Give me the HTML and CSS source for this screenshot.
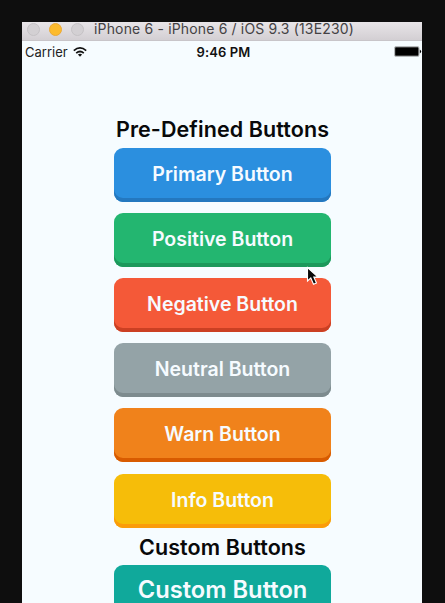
FILE: index.html
```
<!DOCTYPE html>
<html lang="en">
<head>
<meta charset="utf-8">
<title>Buttons</title>
<link rel="stylesheet" href="styles.css">
</head>
<body>
<div class="simulator">
  <header class="titlebar">
    <i class="dot"></i><i class="dot minimize"></i><i class="dot"></i>
    <span class="window-title">iPhone 6 - iPhone 6 / iOS 9.3 (13E230)</span>
  </header>
  <div class="status">
    <div class="carrier"><span>Carrier</span>
      <svg class="wifi" viewBox="0 0 14 10" width="14" height="10"><g fill="none" stroke="#111" stroke-width="1.7"><path d="M.8 3.6Q7-1.8 13.2 3.6"/><path d="M3.2 6.1Q7 2.9 10.8 6.1"/></g><path d="M4.9 7.6Q7 6 9.1 7.6L7 9.8Z" fill="#111"/></svg>
    </div>
    <time class="clock">9:46 PM</time>
    <svg class="battery" viewBox="0 0 28 11" width="28" height="11"><rect x=".5" y=".5" width="24.5" height="10" rx="1.5" fill="#777" stroke="#b5b9bb"/><rect x="1.3" y="1.5" width="23" height="8" rx=".5"/><path d="M25.8 3.5Q28.5 5.5 25.8 7.5Z"/></svg>
  </div>
  <main class="content">
    <h2 class="heading">Pre-Defined Buttons</h2>
    <div class="stack">
      <button class="btn primary">Primary Button</button>
      <button class="btn positive">Positive Button</button>
      <button class="btn negative">Negative Button</button>
      <button class="btn neutral">Neutral Button</button>
      <button class="btn warn">Warn Button</button>
      <button class="btn info">Info Button</button>
    </div>
    <h2 class="heading second">Custom Buttons</h2>
    <button class="btn custom">Custom Button</button>
  </main>
</div>
<svg class="cursor" viewBox="0 0 14 20" width="14" height="20"><path d="M1.5 1.5V15L4.8 12L7.5 18.2L10.5 17L7.8 11H12Z" fill="#080808" stroke="#fff" stroke-width="1.1"/></svg>
</body>
</html>
```
FILE: styles.css
```
* { box-sizing: border-box; }
html, body { height: 100%; }
body {
  margin: 0;
  padding: 22px 23px 0 22px;
  overflow: hidden;
  background: #0e0e0e;
  font-family: Inter, "Liberation Sans", sans-serif;
}
.simulator { height: 581px; overflow: hidden; background: #f6fcff; }
.titlebar {
  display: flex;
  align-items: center;
  height: 19px;
  padding: 0 0 4px 5px;
  background: linear-gradient(#e8e5e8, #d3cfd3);
  border-bottom: 1px solid #c8c5c9;
}
.dot {
  width: 13px;
  height: 13px;
  margin-right: 9px;
  border: 1px solid #c5c2c5;
  border-radius: 50%;
  background: #d3d0d3;
}
.minimize { background: #fdbb2d; border-color: #eba936; }
.window-title {
  margin-left: 1px;
  color: #444244;
  font-size: 14px;
  letter-spacing: .16px;
  line-height: 14px;
  white-space: nowrap;
}
.status {
  display: grid;
  grid-template-columns: 1fr auto 1fr;
  align-items: center;
  height: 21px;
  padding: 0 0 0 3px;
  color: #222;
  font-size: 13px;
}
.carrier { display: flex; align-items: center; gap: 5px; }
.clock { color: #111; font-weight: 600; letter-spacing: .1px; }
.battery { justify-self: end; }
.content { display: flex; flex-direction: column; align-items: center; padding: 54px 0 0 1px; }
.heading {
  height: 31px;
  margin: 0;
  color: #08090a;
  font-size: 21.5px;
  font-weight: 600;
  letter-spacing: .09px;
  line-height: 26px;
  white-space: nowrap;
}
.stack { display: grid; gap: 11.2px; margin-top: .6px; }
.btn {
  width: 217px;
  height: 54px;
  padding: 0 0 2px;
  border: 0;
  border-radius: 9px;
  color: #f6fbff;
  font-family: inherit;
  font-size: 19.5px;
  font-weight: 630;
}
.primary { background: #2b8fdf; box-shadow: inset 0 -4px #2478bf; }
.positive { background: #23b670; box-shadow: inset 0 -4px #1c985b; }
.negative { background: #f45938; box-shadow: inset 0 -4px #cb4023; }
.neutral { background: #94a3a7; box-shadow: inset 0 -4px #7d8b8e; }
.warn { background: #f0821b; box-shadow: inset 0 -4px #d85b00; }
.info { background: #f6bd09; box-shadow: inset 0 -4px #fb9c0a; }
.second { height: 30.8px; margin-top: 6.4px; }
.custom { height: 60px; padding-bottom: 11px; background: #10a99b; font-size: 23.7px; }
.cursor { position: absolute; left: 306px; top: 266px; }
```
